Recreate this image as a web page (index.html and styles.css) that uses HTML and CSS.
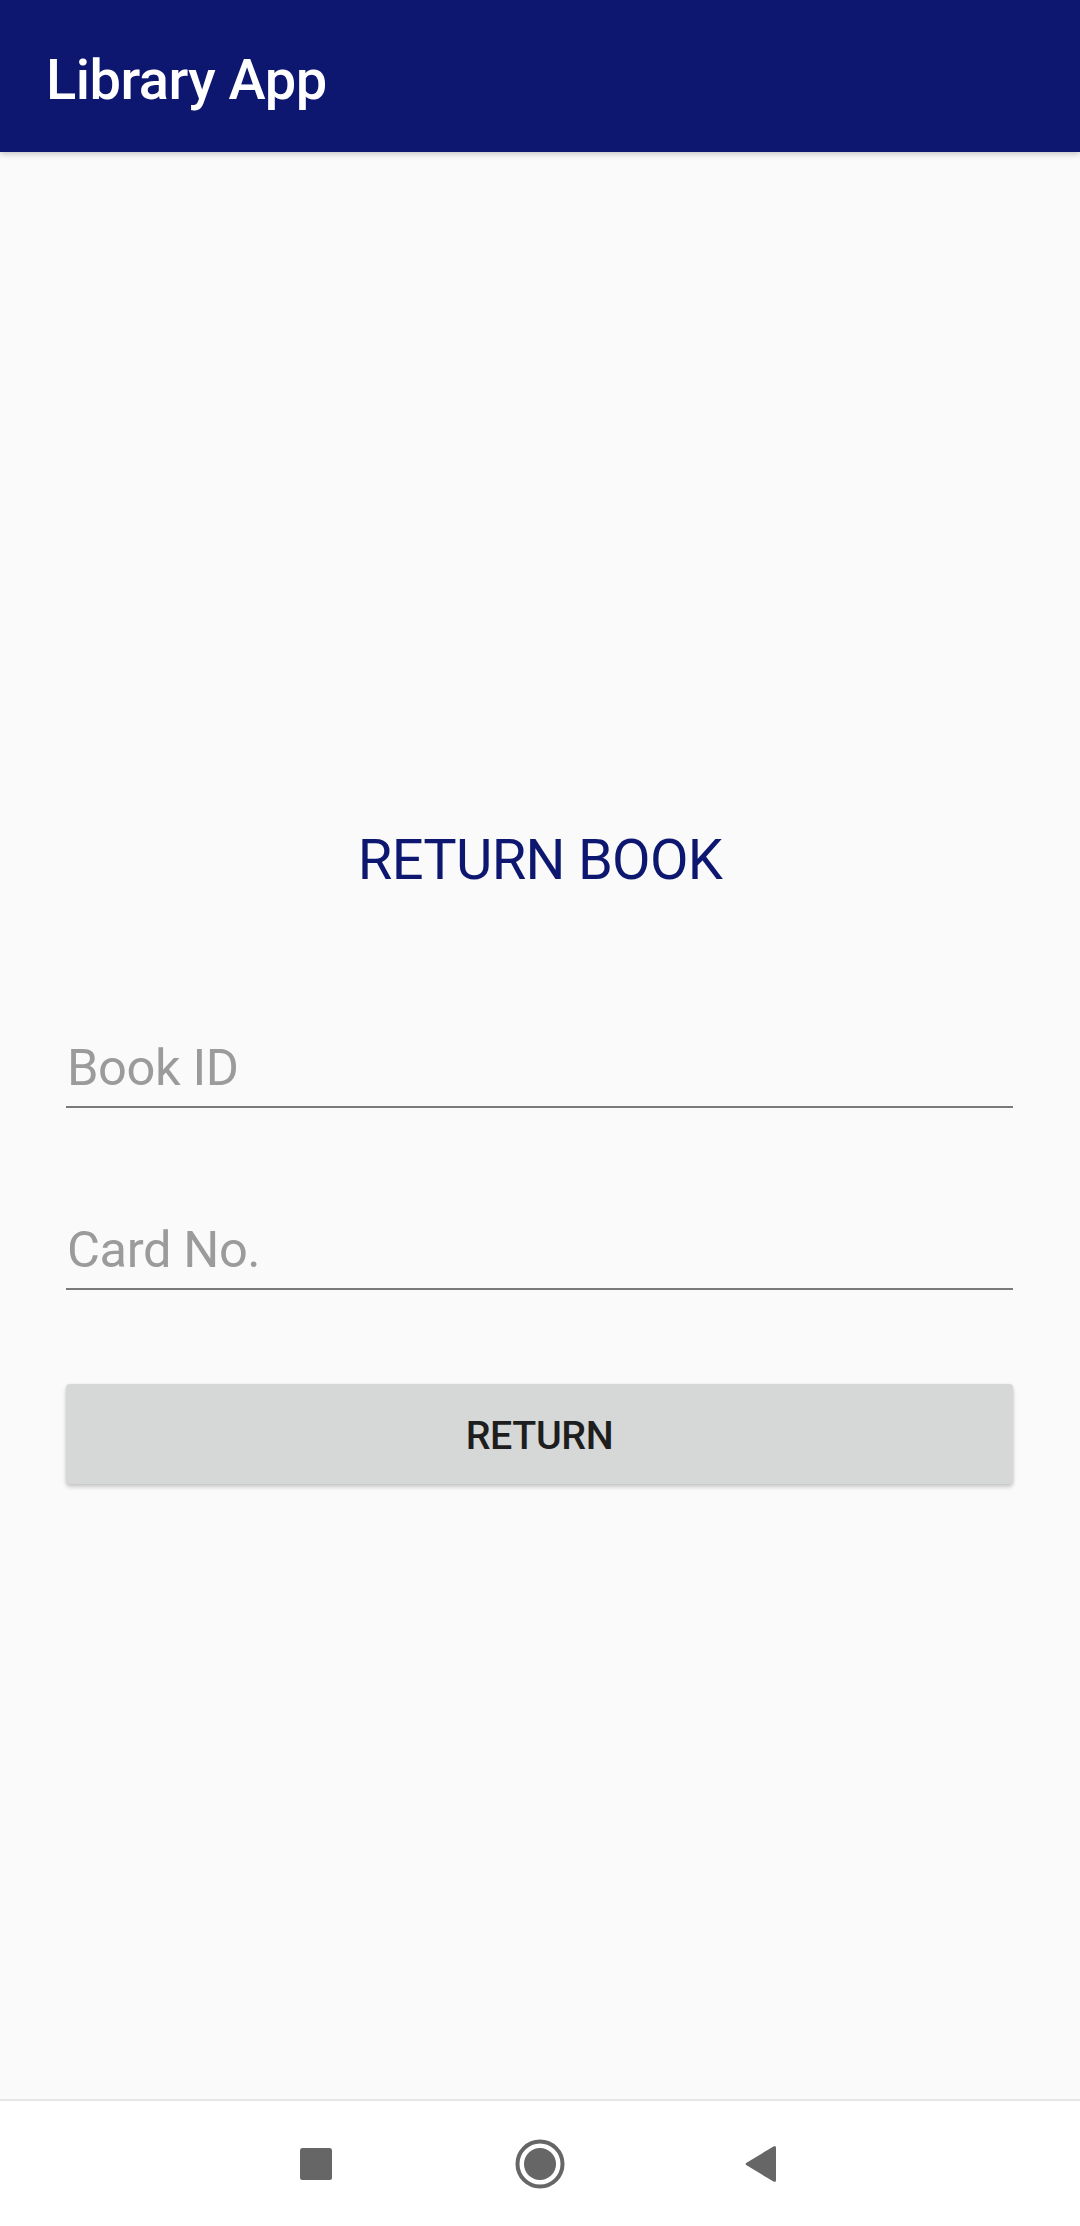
FILE: index.html
```html
<!DOCTYPE html>
<html>
<head>
<meta charset="utf-8">
<title>Library App</title>
<link rel="stylesheet" href="styles.css">
</head>
<body>
<div class="screen">
  <header class="appbar">
    <h1 class="appbar-title">Library App</h1>
  </header>
  <main class="content">
    <h2 class="page-title">RETURN BOOK</h2>
    <form class="form">
      <input class="field" type="text" placeholder="Book ID">
      <input class="field field-second" type="text" placeholder="Card No.">
      <button class="btn" type="button">RETURN</button>
    </form>
  </main>
  <nav class="navbar">
    <div class="nav-slot">
      <svg class="nav-icon" width="50" height="50" viewBox="0 0 50 50"><rect x="9" y="9" width="32" height="32" rx="2.5" fill="#666"/></svg>
    </div>
    <div class="nav-slot">
      <svg class="nav-icon" width="50" height="50" viewBox="0 0 50 50"><circle cx="25" cy="25" r="22.5" fill="none" stroke="#666" stroke-width="4"/><circle cx="25" cy="25" r="16" fill="#666"/></svg>
    </div>
    <div class="nav-slot">
      <svg class="nav-icon" width="50" height="50" viewBox="0 0 50 50"><path d="M37 9 L37 41 Q37 44 34.5 42.6 L7.6 26.3 Q5.5 25 7.6 23.7 L34.5 7.4 Q37 6 37 9 Z" fill="#666"/></svg>
    </div>
  </nav>
</div>
</body>
</html>
```
FILE: styles.css
```css
* { box-sizing: border-box; }
html, body {
  margin: 0;
  padding: 0;
  background: #fafafa;
  font-family: Roboto, "Noto Sans", "Liberation Sans", sans-serif;
}
.screen {
  width: 1080px;
  height: 2226px;
  display: flex;
  flex-direction: column;
  overflow: hidden;
}
.appbar {
  height: 152px;
  flex: 0 0 152px;
  background: #0d1770;
  padding: 48px 0 0 46px;
  box-shadow: 0 2px 6px rgba(0,0,0,0.22);
  position: relative;
  z-index: 1;
}
.appbar-title {
  margin: 0;
  color: #ffffff;
  font-size: 56px;
  font-weight: 500;
  line-height: 64px;
  letter-spacing: -0.5px;
}
.content {
  flex: 1;
  display: flex;
  flex-direction: column;
}
.page-title {
  margin: 676px 0 0 0;
  text-align: center;
  color: #0d1770;
  font-size: 56px;
  font-weight: 400;
  line-height: 64px;
  letter-spacing: -0.7px;
}
.form {
  display: flex;
  flex-direction: column;
  padding: 0 67px 0 66px;
  margin-top: 145px;
}
.field {
  display: block;
  width: 100%;
  height: 71px;
  padding: 0 0 9px 1px;
  margin: 0;
  border: none;
  border-bottom: 2px solid #7a7a7a;
  background: transparent;
  font-family: Roboto, "Noto Sans", sans-serif;
  font-size: 50.6px;
  line-height: 60px;
  letter-spacing: -0.4px;
  color: #222;
  outline: none;
}
.field::placeholder {
  color: #9b9b9b;
}
.field-second {
  margin-top: 111px;
}
.btn {
  margin-top: 94px;
  height: 100px;
  width: 100%;
  border: none;
  border-radius: 4px;
  background: #d6d7d7;
  box-shadow: 0 3px 4px rgba(0,0,0,0.2), 0 0 2px rgba(0,0,0,0.08);
  font-family: Roboto, "Noto Sans", sans-serif;
  font-size: 39.4px;
  font-weight: 500;
  letter-spacing: -0.4px;
  color: #1e1e1e;
  padding: 4px 0 0 0;
  line-height: 46px;
}
.navbar {
  flex: 0 0 127px;
  height: 127px;
  background: #ffffff;
  border-top: 2px solid #e6e6e6;
  display: flex;
  justify-content: center;
  align-items: center;
}
.nav-slot {
  width: 224px;
  display: flex;
  justify-content: center;
  align-items: center;
}
.nav-icon {
  display: block;
}
```
